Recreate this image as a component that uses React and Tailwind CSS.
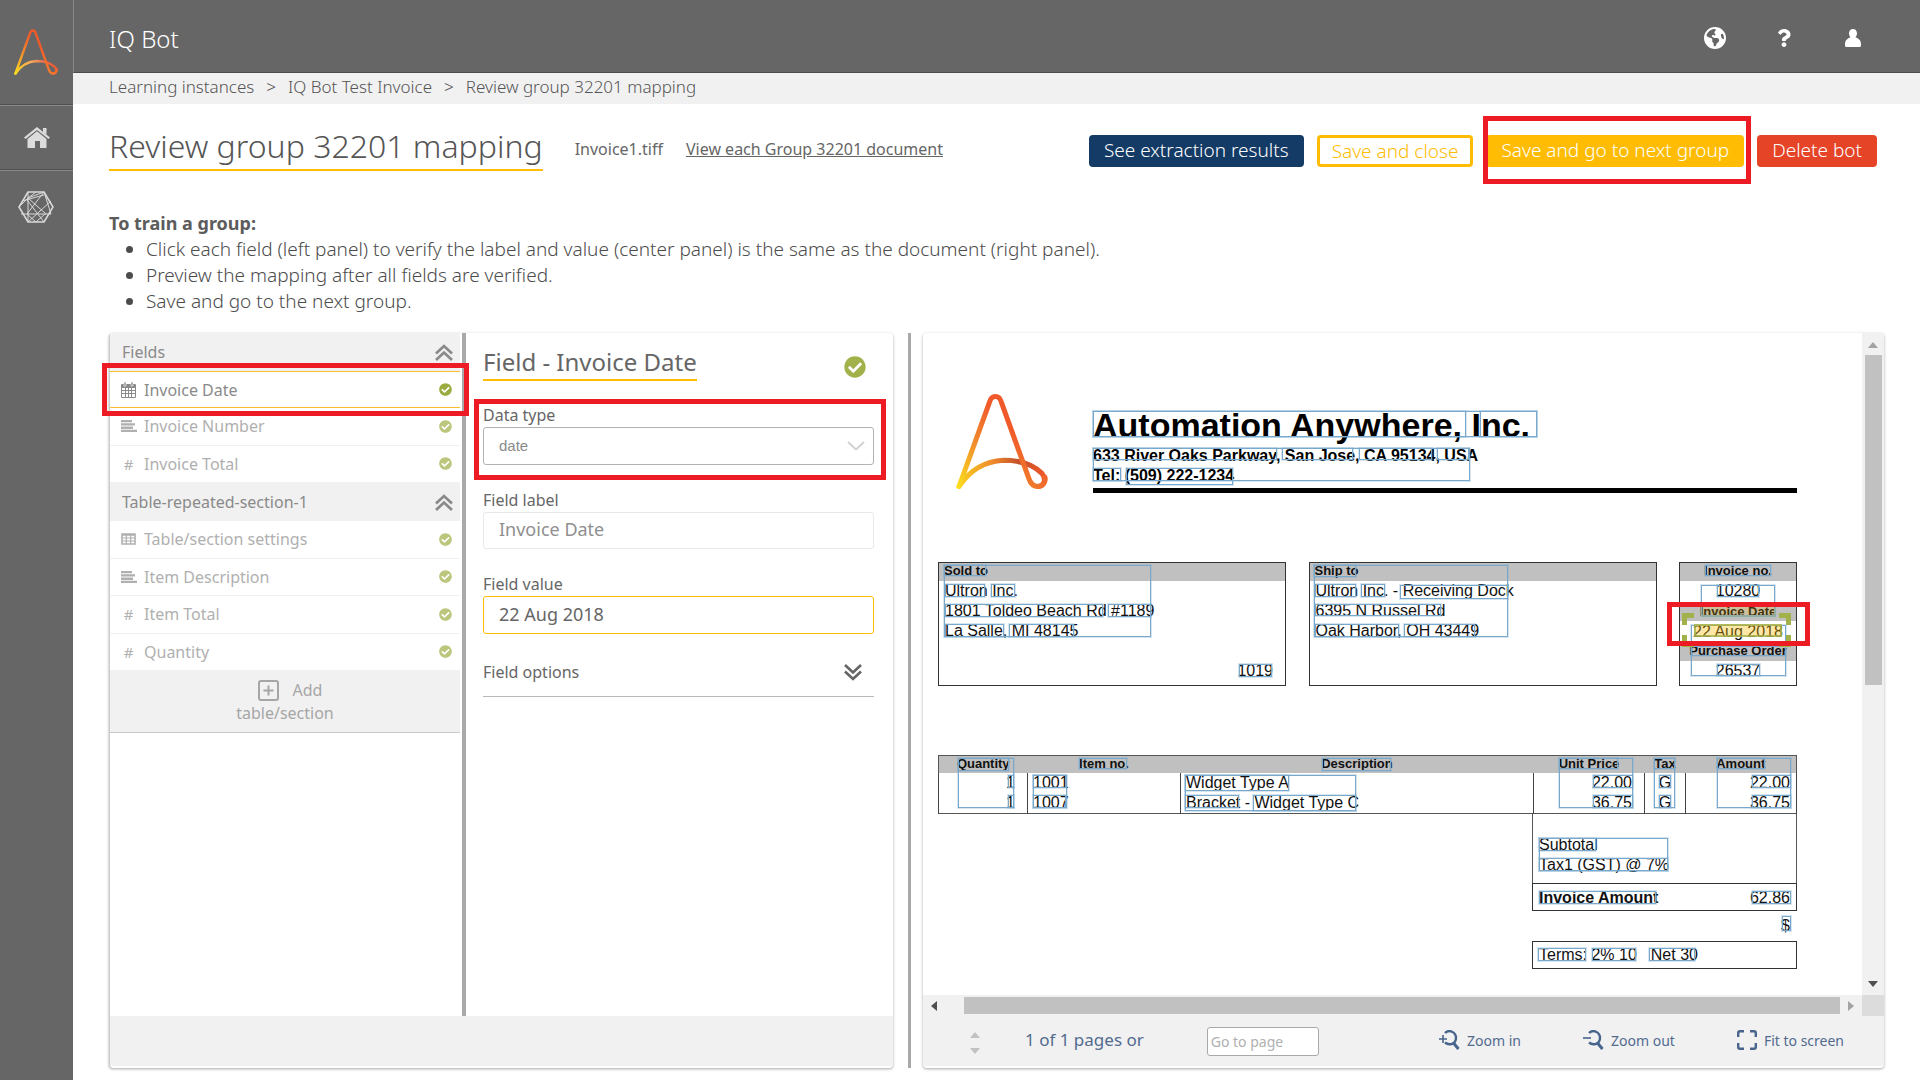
import React from 'react';
import { FaCheckCircle, FaQuestion } from 'react-icons/fa';
import { FaEarthAmericas } from 'react-icons/fa6';

const steps = [
  'Click each field (left panel) to verify the label and value (center panel) is the same as the document (right panel).',
  'Preview the mapping after all fields are verified.',
  'Save and go to the next group.',
];

const tableFields = [
  { icon: 'table', name: 'Table/section settings' },
  { icon: 'text', name: 'Item Description' },
  { icon: 'number', name: 'Item Total' },
  { icon: 'number', name: 'Quantity' },
];

const items = [
  { qty: '1', no: '1001', description: 'Widget Type A', price: '22.00', tax: 'G' },
  { qty: '1', no: '1007', description: 'Bracket - Widget Type C', price: '36.75', tax: 'G' },
];

// left, top, right, bottom of every recognised region, in page pixels
const regions = [
  [170, 78, 614, 104], [170, 78, 543, 104], [557, 78, 614, 104],
  [170, 115, 547, 148], [170, 115, 354, 127], [359, 115, 430, 127], [436, 115, 509, 127], [514, 115, 546, 127],
  [170, 135, 198, 148], [203, 135, 310, 152],
  [21, 232, 228, 304], [21, 232, 63, 243], [22, 251, 62, 264], [68, 251, 92, 264],
  [22, 271, 180, 284], [185, 271, 228, 284], [22, 291, 81, 304], [86, 291, 151, 304], [316, 331, 349, 344],
  [391, 232, 585, 304], [391, 232, 433, 244], [392, 251, 433, 264], [438, 251, 462, 264], [477, 252, 585, 266],
  [392, 271, 518, 283], [392, 291, 476, 304], [481, 291, 552, 304],
  [782, 232, 848, 243], [778, 252, 852, 283], [794, 252, 836, 264],
  [768, 292, 863, 343], [768, 313, 863, 323], [794, 331, 837, 343],
  [35, 425, 91, 475], [35, 425, 86, 438], [85, 442, 91, 455], [85, 462, 91, 475],
  [156, 425, 204, 436], [110, 442, 144, 475], [110, 442, 143, 455], [110, 462, 143, 475],
  [399, 425, 468, 438], [262, 442, 433, 478], [262, 442, 366, 458], [262, 462, 316, 475], [330, 462, 433, 478],
  [636, 425, 710, 475], [636, 425, 695, 436], [670, 442, 710, 455], [670, 462, 710, 475],
  [731, 425, 752, 475], [731, 425, 752, 436], [736, 442, 748, 455], [736, 462, 748, 475],
  [794, 425, 868, 475], [794, 425, 842, 436], [829, 442, 868, 455], [829, 462, 868, 475],
  [616, 505, 745, 538], [616, 505, 673, 518], [616, 525, 745, 538],
  [616, 558, 733, 571], [829, 558, 868, 571], [859, 583, 868, 598],
  [615, 615, 663, 628], [669, 615, 713, 628], [726, 615, 772, 628],
];

const Logo = ({ id, className, arc, arcEnd }) => (
  <svg viewBox="0 0 91 95" className={className} fill="none" strokeWidth="5" strokeLinecap="round" aria-hidden="true">
    <defs>
      <linearGradient id={`${id}-leg`} x1="2" y1="93" x2="60" y2="40" gradientUnits="userSpaceOnUse">
        <stop offset="0" stopColor="#fbe01e" />
        <stop offset="0.55" stopColor="#f18a2d" />
        <stop offset="1" stopColor="#f0592a" />
      </linearGradient>
      <linearGradient id={`${id}-arc`} x1="2" y1="0" x2="88" y2="0" gradientUnits="userSpaceOnUse">
        <stop offset="0" stopColor="#fbd31e" />
        <stop offset="0.4" stopColor={arc} />
        <stop offset="0.7" stopColor={arcEnd} />
        <stop offset="1" stopColor="#f0592a" />
      </linearGradient>
    </defs>
    <path d="M3 92C14 75 29 67 47 66C62 66 76 70 85 79C90 85 87 92 81 92" stroke={`url(#${id}-arc)`} />
    <path d="M3 92L33 9C35 1 43 1 45 9L72 84C74 90 77 92 81 92C86 92 89 87 88 83" stroke={`url(#${id}-leg)`} />
  </svg>
);

const HexIcon = () => (
  <svg viewBox="0 0 36 34" className="h-[34px] w-9" fill="none" stroke="#d9d9d9" strokeWidth="1" aria-hidden="true">
    <path d="M10 2H26L35 17L26 32H10L1 17Z" strokeWidth="1.6" />
    <path d="M10 2V32M26 2L9 24M10 8L28 24M10 8L26 2M4 11L26 5M26 2L33 24M18 2L10 8M3 24H33M10 32L33 11M26 32L9 10M1 17L10 8M9 24L18 32L27 24" />
  </svg>
);

const UserIcon = () => (
  <svg viewBox="0 0 16 18" className="h-[18px] w-4" fill="#fff" aria-hidden="true">
    <path d="M8 0C10.500 0 12 2 12 4.300C12 6 11.300 7.300 10.500 8.300C13.500 9.500 16 11.500 16 15V16.500Q16 18 14.500 18H1.500Q0 18 0 16.500V15C0 11.500 2.500 9.500 5.500 8.300C4.700 7.300 4 6 4 4.300C4 2 5.500 0 8 0Z" />
  </svg>
);

const DoubleChevron = ({ className }) => (
  <svg viewBox="0 0 18 17" className={`h-[17px] w-[18px] ${className}`} fill="none" strokeWidth="2.700" aria-hidden="true">
    <path d="M1 9.500L9 2L17 9.500M1 16L9 8.500L17 16" />
  </svg>
);

const FieldIcon = ({ type }) => {
  if (type === 'date') {
    return (
      <svg viewBox="0 0 15 16" className="h-4 w-[15px]" aria-hidden="true">
        <path d="M1 2H14Q15 2 15 3V15Q15 16 14 16H1Q0 16 0 15V3Q0 2 1 2Z" fill="currentColor" />
        <path d="M3 0H5V4H3ZM10 0H12V4H10Z" fill="currentColor" stroke="#fff" strokeWidth="0.600" />
        <path d="M1 6H4V8H1ZM5 6H7V8H5ZM8 6H10V8H8ZM11 6H14V8H11ZM1 9H4V11H1ZM5 9H7V11H5ZM8 9H10V11H8ZM11 9H14V11H11ZM1 12H4V15H1ZM5 12H7V15H5ZM8 12H10V15H8ZM11 12H14V15H11Z" fill="#fff" />
      </svg>
    );
  }
  if (type === 'text') {
    return (
      <svg viewBox="0 0 16 12" className="h-3 w-4" fill="currentColor" aria-hidden="true">
        <path d="M0 0H11V2.300H0ZM0 3.300H14V5.600H0ZM0 6.600H12V8.900H0ZM0 9.800H16V12H0Z" />
      </svg>
    );
  }
  if (type === 'table') {
    return (
      <svg viewBox="0 0 15 12" className="h-3 w-[15px]" fill="none" stroke="currentColor" aria-hidden="true">
        <path d="M1 1H14V11H1ZM1 2H14" strokeWidth="1.600" />
        <path d="M1 5H14M1 8H14M5.300 1V11M9.700 1V11" strokeWidth="1.200" />
      </svg>
    );
  }
  return <span className="text-[15px]">#</span>;
};

const Highlight = ({ className }) => (
  <div className={`pointer-events-none absolute z-10 border-5 border-[#ed1c24] ${className}`} />
);

const FieldRow = ({ icon, name, active }) => (
  <li className={active ? 'relative border-y border-[#fbbc2f] bg-white text-[#8a8a8a]' : 'border-b border-[#f1f1f1] text-[#b0b0b0]'}>
    <button className="flex h-full w-full items-center pl-[11px] pr-2">
      <span className="flex w-[23px] items-center pr-2"><span className="flex w-4 justify-center"><FieldIcon type={icon} /></span></span>
      <span className="flex-1 text-left">{name}</span>
      <FaCheckCircle className={active ? 'h-[13px] w-[13px] text-[#9cab3f]' : 'h-[13px] w-[13px] text-[#bcc67c]'} />
    </button>
    {active && <Highlight className="-inset-y-[9px] -left-2 -right-[9px]" />}
  </li>
);

const SectionHeader = ({ title }) => (
  <button className="flex h-[38px] w-full items-center justify-between bg-[#f1f1f1] pl-3 pr-[7px] text-[#8a8a8a]">
    {title}
    <DoubleChevron className="stroke-[#8a8a8a]" />
  </button>
);

const Sidebar = () => (
  <nav className="w-[73px] shrink-0 bg-[#666]">
    <div className="flex h-[105px] border-b border-[#505050] pl-3.5 pt-[29px]">
      <Logo id="nav" className="h-[46px] w-11" arc="#f5a55a" arcEnd="#ee6f4f" />
    </div>
    <a href="#home" aria-label="Home" className="flex h-[65px] items-center justify-center border-b border-t border-b-[#505050] border-t-[#8a8a8a]">
      <svg viewBox="0 0 26 21" className="h-[21px] w-[26px]" fill="#dcdcdc" aria-hidden="true">
        <path d="M13 0L26 10.500L24.500 12L13 3L1.500 12L0 10.500ZM19 1H22.500V7.500L19 4.700ZM13 4.300L22.500 12V21H16V14H11V21H3.500V12Z" />
      </svg>
    </a>
    <a href="#instances" aria-label="Learning instances" className="flex border-t border-[#8a8a8a] pl-[18px] pt-[19px]">
      <HexIcon />
    </a>
  </nav>
);

const Header = () => (
  <header className="flex h-[73px] items-center justify-between border-b border-l border-b-[#4c4c4c] border-l-[#8a8a8a] bg-[#666] pl-[35px] pr-[55px]">
    <span className="pt-1.5 text-[24px] font-light text-white">IQ Bot</span>
    <div className="flex items-center gap-[45px] pt-1 text-white [&_button]:flex [&_button]:w-6 [&_button]:justify-center">
      <button aria-label="Language"><FaEarthAmericas className="h-[22px] w-[22px]" /></button>
      <button aria-label="Help"><FaQuestion className="h-[18px] w-[18px]" /></button>
      <button aria-label="Account"><UserIcon /></button>
    </div>
  </header>
);

const FieldsPanel = () => (
  <div className="w-[350px] shrink-0">
    <SectionHeader title="Fields" />
    <ul className="grid h-28 grid-rows-3">
      <FieldRow icon="date" name="Invoice Date" active />
      <FieldRow icon="text" name="Invoice Number" />
      <FieldRow icon="number" name="Invoice Total" />
    </ul>
    <SectionHeader title="Table-repeated-section-1" />
    <ul className="grid h-[150px] grid-rows-4">
      {tableFields.map((f) => (
        <FieldRow key={f.name} icon={f.icon} name={f.name} />
      ))}
    </ul>
    <button className="block h-[62px] w-full border-b border-[#c8c8c8] bg-[#f1f1f1] text-center leading-[23px] text-[#a6a6a6]">
      <span className="flex items-center justify-center gap-3.5 pl-2.5">
        <svg viewBox="0 0 21 21" className="h-[21px] w-[21px]" fill="none" stroke="#a6a6a6" strokeWidth="2" aria-hidden="true">
          <rect x="1" y="1" width="19" height="19" rx="2" />
          <path d="M5.500 10.500H15.500M10.500 5.500V15.500" />
        </svg>
        Add
      </span>
      table/section
    </button>
  </div>
);

const FieldEditor = () => (
  <div className="min-w-0 flex-1 pl-[17px] pr-[19px] pt-3 text-[#666]">
    <div className="flex items-start justify-between pr-2">
      <h2 className="border-b-2 border-[#ffbc03] pb-px text-[24px] leading-[33px]">Field - Invoice Date</h2>
      <FaCheckCircle className="mt-[11px] h-[22px] w-[22px] text-[#a3b14b]" />
    </div>
    <div className="relative pt-[23px]">
      <label htmlFor="data-type" className="block leading-[23px]">Data type</label>
      <div className="relative">
        <select id="data-type" className="block h-[38px] w-full appearance-none rounded-[3px] border border-[#b3b3b3] bg-white px-[15px] font-['Liberation_Sans',Arial,sans-serif] text-[15px] text-[#8a8a8a]">
          <option>date</option>
        </select>
        <svg viewBox="0 0 18 10" className="pointer-events-none absolute right-[9px] top-3.5 h-2.5 w-[18px]" fill="none" stroke="#d0d0d0" strokeWidth="1.800" aria-hidden="true">
          <path d="M1 1L9 8.500L17 1" />
        </svg>
      </div>
      <Highlight className="-bottom-[15px] -left-[9px] -right-3 top-[18px]" />
    </div>
    <label htmlFor="field-label" className="mt-6 block leading-[23px]">Field label</label>
    <input id="field-label" defaultValue="Invoice Date" className="block h-[37px] w-full rounded-[3px] border border-[#e8e8e8] px-[15px] pb-[3px] text-[18px] text-[#8f8f8f]" />
    <label htmlFor="field-value" className="mt-6 block leading-[23px]">Field value</label>
    <input id="field-value" defaultValue="22 Aug 2018" className="block h-[38px] w-full rounded-[3px] border border-[#ffbc03] px-[15px] pb-[3px] text-[18px]" />
    <button className="mt-5 flex h-[43px] w-full items-center justify-between border-b border-[#b8b8b8] pb-1.5 pr-3">
      Field options
      <DoubleChevron className="rotate-180 stroke-[#666]" />
    </button>
  </div>
);

const AddressBox = ({ title, lines, number }) => (
  <div className="flex w-[348px] flex-col border border-[#333] bg-white">
    <div className="h-[18px] bg-[#c0c0c0] pl-[5px] text-[13px] font-bold leading-4">{title}</div>
    <div className="flex-1 pl-1.5 leading-5">
      {lines.map((line) => <p key={line}>{line}</p>)}
    </div>
    {number && <p className="pb-1 pr-3 text-right leading-5">{number}</p>}
  </div>
);

const Invoice = () => (
  <article className="relative w-[900px] pl-[15px] pt-[60px] font-['Liberation_Sans',Arial,sans-serif] text-[16px] text-[#111]">
    <div className="flex w-[859px]">
      <Logo id="page" className="ml-[18px] h-[97px] w-[92px]" arc="#ee8a2d" arcEnd="#c4502c" />
      <div className="ml-[45px] flex-1 border-b-5 border-black pb-0.5 pt-3 font-bold text-black">
        <h3 className="text-[34px] leading-[41px]">Automation Anywhere, Inc.</h3>
        <p className="leading-5">633 River Oaks Parkway, San Jose, CA 95134, USA</p>
        <p className="leading-5">Tel: (509) 222-1234</p>
      </div>
    </div>

    <div className="mt-[69px] flex h-[124px] w-[859px] justify-between">
      <AddressBox title="Sold to" lines={['Ultron Inc.', '1801 Toldeo Beach Rd #1189', 'La Salle, MI 48145']} number="1019" />
      <AddressBox title="Ship to" lines={['Ultron Inc. - Receiving Dock', '6395 N Russel Rd', 'Oak Harbor, OH 43449']} />
      <dl className="w-[118px] border border-[#333] text-center leading-5 [&>dt]:bg-[#c0c0c0] [&>dt]:text-[13px] [&>dt]:font-bold">
        <dt className="h-[18px] leading-4">Invoice no.</dt>
        <dd className="pb-0.5">10280</dd>
        <dt className="leading-[18px]">Invoice Date</dt>
        <dd className="h-[21px] leading-[21px]">22 Aug 2018</dd>
        <dt className="h-[19px] leading-[18px]">Purchase Order</dt>
        <dd>26537</dd>
      </dl>
    </div>

    <table className="mt-[69px] w-[859px] table-fixed border-collapse border border-[#555]">
      <thead className="bg-[#c0c0c0] text-[13px]">
        <tr className="h-[17px] leading-4">
          <th className="w-[89px]">Quantity</th>
          <th className="w-[153px]">Item no.</th>
          <th className="w-[353px]">Description</th>
          <th className="w-[111px]">Unit Price</th>
          <th className="w-[41px]">Tax</th>
          <th>Amount</th>
        </tr>
      </thead>
      <tbody className="[&_td]:border-x [&_td]:border-[#444]">
        {items.map((item) => (
          <tr key={item.no} className="h-5 leading-[19px]">
            <td className="pb-px pr-3 text-right">{item.qty}</td>
            <td className="pb-px pl-[5px]">{item.no}</td>
            <td className="pb-px pl-[5px]">{item.description}</td>
            <td className="pb-px pr-3 text-right">{item.price}</td>
            <td className="pb-px text-center">{item.tax}</td>
            <td className="pb-px pr-1.5 text-right">{item.price}</td>
          </tr>
        ))}
      </tbody>
    </table>

    <div className="w-[859px] pl-[594px]">
      <div className="h-[69px] border-x border-[#555] pl-1.5 pt-[21px] leading-5">
        <p>Subtotal</p>
        <p>Tax1 (GST) @ 7%</p>
      </div>
      <p className="flex h-7 items-center justify-between border border-[#333] px-1.5 pt-0.5">
        <b>Invoice Amount</b>
        <span>62.86</span>
      </p>
      <p className="pb-[5px] pr-[7px] pt-[5px] text-right leading-5">$</p>
      <p className="flex h-7 items-center gap-[14px] border border-[#333] pl-1.5">
        <span>Terms: 2% 10</span>
        <span>Net 30</span>
      </p>
    </div>

    {regions.map(([left, top, right, bottom]) => (
      <div
        key={`${left}-${top}-${right}-${bottom}`}
        className="absolute border border-[#78a9cd] shadow-[0_0_0_1px_rgba(120,169,205,0.3)]"
        style={{ left, top, width: right - left, height: bottom - top }}
      />
    ))}
    <div className="absolute left-[778px] top-[272px] h-3 w-[75px] border border-[#8db0a5] bg-[#ffbc03]/20" />
    <div className="absolute left-[771px] top-[291px] h-[13px] w-[88px] border-2 border-[#a3b14b]/80 bg-[#ffbc03]/35" />
    <div className="absolute left-[759px] top-[280px] h-3 w-3 border-l-5 border-t-5 border-[#a3b14b]" />
    <div className="absolute left-[856px] top-[280px] h-3 w-3 border-r-5 border-t-5 border-[#a3b14b]" />
    <div className="absolute left-[759px] top-[302px] h-3 w-3 border-b-5 border-l-5 border-[#a3b14b]" />
    <div className="absolute left-[856px] top-[302px] h-3 w-3 border-b-5 border-r-5 border-[#a3b14b]" />
    <Highlight className="left-[744px] top-[269px] h-11 w-[143px]" />
  </article>
);

const Triangle = ({ className }) => (
  <svg viewBox="0 0 10 6" className={`h-1.5 w-2.5 ${className}`} aria-hidden="true">
    <path d="M0 6L5 0L10 6Z" />
  </svg>
);

const ZoomIcon = ({ plus }) => (
  <svg viewBox="0 0 21 20" className="h-5 w-[21px]" fill="none" stroke="#47658c" strokeWidth="2.400" aria-hidden="true">
    <path d="M6 3C10-1 17 2 17 8C17 14 10 16 6 12.500" />
    <path d="M14.500 13L19.500 19" strokeWidth="3" />
    <path d={plus ? 'M0 9H8M4 5V13' : 'M0 8H8'} strokeWidth="1.600" />
  </svg>
);

const Viewer = () => (
  <section className="flex min-w-0 flex-1 flex-col rounded-[4px] bg-white shadow-[0_1px_3px_rgba(0,0,0,0.35)]">
    <div className="flex flex-1">
      <div className="min-w-0 flex-1 overflow-hidden"><Invoice /></div>
      <div className="flex w-[22px] flex-col items-center bg-[#f1f1f1]">
        <Triangle className="mb-[7px] mt-[9px] fill-[#a3a3a3]" />
        <div className="h-[330px] w-[17px] bg-[#c1c1c1]" />
        <Triangle className="mb-2 mt-auto rotate-180 fill-[#505050]" />
      </div>
    </div>
    <div className="flex h-[21px] items-center bg-[#f1f1f1]">
      <Triangle className="ml-1.5 mr-[25px] -rotate-90 fill-[#505050]" />
      <div className="h-[17px] flex-1 bg-[#c1c1c1]" />
      <Triangle className="mx-1.5 rotate-90 fill-[#a3a3a3]" />
      <div className="h-full w-[22px] bg-[#dcdcdc]" />
    </div>
    <div className="mb-0.5 flex h-[50px] items-center bg-[#f1f1f1] pb-0.5 pr-10 text-[#526b8f]">
      <div className="ml-[47px] flex flex-col gap-2.5 pt-1.5">
        <button aria-label="Previous page" className="block"><Triangle className="fill-[#c1c1c1]" /></button>
        <button aria-label="Next page" className="block"><Triangle className="rotate-180 fill-[#c1c1c1]" /></button>
      </div>
      <span className="ml-[45px] text-[17px]">1 of 1 pages or</span>
      <input aria-label="Go to page" placeholder="Go to page" className="ml-[63px] mt-0.5 h-[29px] w-[112px] rounded-[3px] border border-[#a9a9a9] bg-white px-[3px] text-[14px] placeholder:text-[#b0b0b0]" />
      <div className="ml-auto flex gap-[62px] text-[14px]">
        <button className="flex items-center gap-[7px]"><ZoomIcon plus />Zoom in</button>
        <button className="flex items-center gap-[7px]"><ZoomIcon />Zoom out</button>
        <button className="flex items-center gap-[7px]">
          <svg viewBox="0 0 20 20" className="h-5 w-5" fill="none" stroke="#47658c" strokeWidth="2.400" aria-hidden="true">
            <path d="M1.200 7V3Q1.200 1.200 3 1.200H7M13 1.200H17Q18.800 1.200 18.800 3V7M18.800 13V17Q18.800 18.800 17 18.800H13M7 18.800H3Q1.200 18.800 1.200 17V13" />
          </svg>
          Fit to screen
        </button>
      </div>
    </div>
  </section>
);

const App = () => {
  return (
    <div className="flex min-h-screen bg-white font-['Noto_Sans',sans-serif] text-[16px] text-[#666]">
      <Sidebar />
      <div className="flex min-w-0 flex-1 flex-col">
        <Header />
        <nav className="flex h-[31px] items-center gap-3 bg-[#f1f1f1] pb-[3px] pl-9 text-[17px] font-light text-[#555]">
          <a href="#instances">Learning instances</a>
          <span>&gt;</span>
          <a href="#instance">IQ Bot Test Invoice</a>
          <span>&gt;</span>
          <a href="#group">Review group 32201 mapping</a>
        </nav>

        <main className="flex flex-1 flex-col px-9 pb-3 pt-[22px]">
          <div className="flex items-center">
            <h1 className="border-b-2 border-[#ffbc03] pb-[3px] text-[32px] font-light leading-[40px] text-[#555]">Review group 32201 mapping</h1>
            <span className="ml-8">Invoice1.tiff</span>
            <a href="#documents" className="ml-[23px] underline">View each Group 32201 document</a>
            <div className="mb-1 ml-auto mr-[7px] flex gap-[13px] self-end text-[19px] font-light text-white [&_button]:h-8 [&_button]:rounded-[4px]">
              <button className="bg-[#143a66] px-[15px] pb-px">See extraction results</button>
              <button className="border-3 border-[#ffbc03] px-3 pb-px leading-6 text-[#ffbc03]">Save and close</button>
              <div className="relative">
                <button className="bg-[#ffbc03] px-[15px] pb-px">Save and go to next group</button>
                <Highlight className="-bottom-[17px] -left-[3px] -right-[7px] -top-[19px]" />
              </div>
              <button className="bg-[#e54427] px-[15px] pb-px">Delete bot</button>
            </div>
          </div>

          <div className="mt-[39px] text-[19px] leading-[26px] text-[#4c4c4c]">
            <p className="text-[18px] font-bold text-[#5c5c5c]">To train a group:</p>
            <ul className="list-disc pl-[37px] font-light">
              {steps.map((step) => <li key={step}>{step}</li>)}
            </ul>
          </div>

          <div className="mt-[19px] flex flex-1">
            <section className="flex w-[784px] shrink-0 flex-col rounded-[4px] border-l border-[#ccc] bg-white shadow-[0_1px_3px_rgba(0,0,0,0.35)]">
              <div className="flex flex-1">
                <FieldsPanel />
                <div className="ml-0.5 w-1 bg-[#a9a9a9]" />
                <FieldEditor />
              </div>
              <div className="mb-0.5 h-[50px] bg-[#f1f1f1]" />
            </section>
            <div className="ml-[15px] mr-3 w-[3px] shrink-0 bg-[#a9a9a9]" />
            <Viewer />
          </div>
        </main>
      </div>
    </div>
  );
};

export default App;
